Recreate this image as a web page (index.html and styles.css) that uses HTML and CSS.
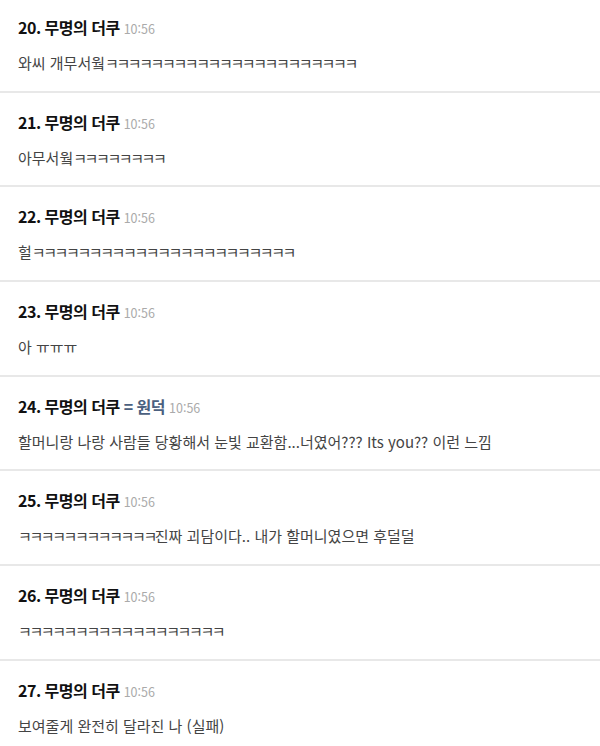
FILE: index.html
```html
<!DOCTYPE html>
<html lang="ko">
<head>
    <meta charset="UTF-8">
    <meta name="viewport" content="width=device-width, initial-scale=1.0">
    <title>댓글</title>
    <link rel="stylesheet" href="styles.css">
</head>
<body>
    <div class="comments">
        <div class="comment">
            <div class="head"><span class="num">20.</span> 무명의 더쿠 <span class="time">10:56</span></div>
            <p class="text">와씨 개무서웤<span class="kk">ㅋㅋㅋㅋㅋㅋㅋㅋㅋㅋㅋㅋㅋㅋㅋㅋㅋㅋㅋㅋㅋㅋ</span></p>
        </div>
        <div class="comment">
            <div class="head"><span class="num">21.</span> 무명의 더쿠 <span class="time">10:56</span></div>
            <p class="text">아무서웤<span class="kk">ㅋㅋㅋㅋㅋㅋㅋㅋ</span></p>
        </div>
        <div class="comment">
            <div class="head"><span class="num">22.</span> 무명의 더쿠 <span class="time">10:56</span></div>
            <p class="text">헐<span class="kk">ㅋㅋㅋㅋㅋㅋㅋㅋㅋㅋㅋㅋㅋㅋㅋㅋㅋㅋㅋㅋㅋㅋㅋ</span></p>
        </div>
        <div class="comment">
            <div class="head"><span class="num">23.</span> 무명의 더쿠 <span class="time">10:56</span></div>
            <p class="text">아 ㅠㅠㅠ</p>
        </div>
        <div class="comment">
            <div class="head"><span class="num">24.</span> 무명의 더쿠 <span class="alias">= 원덕</span> <span class="time">10:56</span></div>
            <p class="text">할머니랑 나랑 사람들 당황해서 눈빛 교환함...너였어??? Its you?? 이런 느낌</p>
        </div>
        <div class="comment">
            <div class="head"><span class="num">25.</span> 무명의 더쿠 <span class="time">10:56</span></div>
            <p class="text"><span class="kk">ㅋㅋㅋㅋㅋㅋㅋㅋㅋㅋㅋㅋ</span>진짜 괴담이다.. 내가 할머니였으면 후덜덜</p>
        </div>
        <div class="comment">
            <div class="head"><span class="num">26.</span> 무명의 더쿠 <span class="time">10:56</span></div>
            <p class="text"><span class="kk">ㅋㅋㅋㅋㅋㅋㅋㅋㅋㅋㅋㅋㅋㅋㅋㅋㅋㅋ</span></p>
        </div>
        <div class="comment">
            <div class="head"><span class="num">27.</span> 무명의 더쿠 <span class="time">10:56</span></div>
            <p class="text">보여줄게 완전히 달라진 나 (실패)</p>
        </div>
    </div>
</body>
</html>
```

FILE: styles.css
```css
body {
    margin: 0;
    background: #fff;
    font-family: "Noto Sans CJK KR", "Noto Sans", sans-serif;
    overflow: hidden;
}
.comments {
    margin-top: -2px;
}
.comment {
    padding: 17px 18px 15.7px;
    border-bottom: 2px solid #e8e8e8;
}
.head {
    height: 24px;
    font-size: 16px;
    line-height: 24px;
    font-weight: bold;
    color: #111;
    letter-spacing: -0.5px;
    white-space: nowrap;
}
.head .time {
    font-size: 12.5px;
    line-height: 1;
    font-weight: normal;
    color: #aaa;
    letter-spacing: 0;
}
.head .alias {
    color: #4b6080;
}
.text {
    height: 24px;
    margin: 12px 0 0;
    font-size: 15px;
    line-height: 24px;
    color: #444;
    white-space: nowrap;
}
.kk {
    letter-spacing: -2.4px;
}
```
